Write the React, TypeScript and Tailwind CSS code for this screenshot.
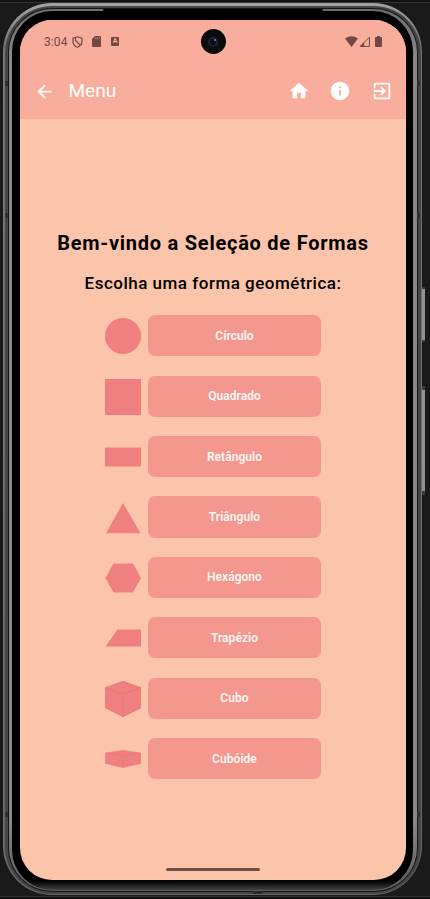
import React from "react";

const shapes: { label: string; art: React.ReactNode }[] = [
  { label: "Círculo", art: <circle cx="18" cy="18" r="18" /> },
  { label: "Quadrado", art: <path d="M0 0H36V36H0Z" /> },
  { label: "Retângulo", art: <path d="M0 8.5H36V27.5H0Z" /> },
  { label: "Triângulo", art: <path d="M18 3L35.5 33.3H1Z" /> },
  { label: "Hexágono", art: <path d="M8.5 3.5H28L36 18L28 32.5H8.5L.5 18Z" /> },
  { label: "Trapézio", art: <path d="M12.5 9.5H36V26.5H.5Z" /> },
  {
    label: "Cubo",
    art: (
      <g stroke="#dc7272" strokeWidth=".6">
        <path d="M18 .3L35.7 6.5V27L18 35.7L.5 27V6.5Z" />
        <path d="M.5 6.5L18 13L35.7 6.5M18 13V35.7" fill="none" />
      </g>
    ),
  },
  {
    label: "Cubóide",
    art: (
      <g stroke="#e07676" strokeWidth=".5">
        <path d="M18 9.5L35.7 12V22.5L18 26.5L.5 22.5V12Z" />
        <path d="M.5 12L18 15L35.7 12M18 15V26.5" fill="none" />
      </g>
    ),
  },
];

function StatusBar() {
  return (
    <div className="flex h-[43px] items-center justify-between pl-[24px] pr-[24px] text-[#73483f]">
      <div className="flex items-center">
        <span className="w-[27px] whitespace-nowrap text-[12px] leading-[14px] tracking-[0.1px]">3:04</span>
        <svg className="ml-px h-[12px] w-[11px]" viewBox="0 0 11 12" fill="none" stroke="currentColor" strokeWidth="1.2">
          <path d="M5.5.8L10 2.3V5.5C10 8.2 8 10.3 5.5 11.2C3 10.3 1 8.2 1 5.5V2.3Z" />
          <path d="M3.5 2V4.5L8.5 9.5" />
        </svg>
        <svg className="ml-[9px] h-[11px] w-[9px]" viewBox="0 0 9 11" fill="currentColor">
          <path fillRule="evenodd" d="M3 0H8Q9 0 9 1V10Q9 11 8 11H1Q0 11 0 10V3ZM3.6 1.5V3H4.2V1.5ZM5.3 1.5V3H5.9V1.5ZM7 1.5V3H7.6V1.5Z" />
        </svg>
        <span className="ml-[10px] flex h-[9px] w-[8px] items-center justify-center rounded-[1px] bg-[#73483f] text-[7px] font-bold leading-none text-[#f9ae9e]">A</span>
      </div>
      <div className="flex items-center">
        <svg className="h-[11px] w-[13px]" viewBox="0 0 13 11" fill="currentColor">
          <path d="M0 2.5Q6.5-2 13 2.5L6.5 11Z" />
        </svg>
        <svg className="ml-[1px] h-[11px] w-[11px]" viewBox="0 0 11 11">
          <path d="M1.3 10.4L10.4 1.2V10.4Z" fill="none" stroke="currentColor" />
          <path d="M1 10.5L5.2 6.5V10.5Z" fill="currentColor" />
        </svg>
        <svg className="ml-[5px] h-[11px] w-[7px]" viewBox="0 0 7 11" fill="currentColor">
          <path d="M2 0H5V1H6Q7 1 7 2V10Q7 11 6 11H1Q0 11 0 10V2Q0 1 1 1H2Z" />
        </svg>
      </div>
    </div>
  );
}

function TopBar() {
  return (
    <header className="flex h-[56px] items-center pl-[13.5px] pr-[13.5px] text-white">
      <svg className="h-[21px] w-[21px]" viewBox="0 0 24 24" fill="currentColor">
        <path d="M20 11H7.83l5.59-5.59L12 4l-8 8 8 8 1.41-1.41L7.83 13H20v-2z" />
      </svg>
      <span className="ml-[14px] flex-1 text-[19px] leading-6">Menu</span>
      <div className="flex items-center gap-[19.5px]">
        <svg className="h-[22px] w-[22px]" viewBox="0 0 24 24" fill="currentColor">
          <path d="M10 20v-6h4v6h5v-8h3L12 3 2 12h3v8z" />
        </svg>
        <svg className="h-[22px] w-[22px]" viewBox="0 0 24 24" fill="currentColor">
          <path d="M12 2C6.48 2 2 6.48 2 12s4.48 10 10 10 10-4.48 10-10S17.52 2 12 2zm1 15h-2v-6h2v6zm0-8h-2V7h2v2z" />
        </svg>
        <svg className="h-[22px] w-[22px]" viewBox="0 0 24 24" fill="currentColor">
          <path d="M10.09 15.59L11.5 17l5-5-5-5-1.41 1.41L12.67 11H3v2h9.67l-2.58 2.59zM19 3H5c-1.11 0-2 .9-2 2v4h2V5h14v14H5v-4H3v4c0 1.1.89 2 2 2h14c1.1 0 2-.9 2-2V5c0-1.1-.9-2-2-2z" />
        </svg>
      </div>
    </header>
  );
}

function Camera() {
  return (
    <div className="absolute left-[180.5px] top-[9px] flex h-[25px] w-[25px] items-center justify-center rounded-full bg-[#0b0c0e]">
      <div className="flex h-[10px] w-[10px] items-center justify-center rounded-full bg-[#20222b]">
        <div className="flex h-[6px] w-[6px] justify-end rounded-full bg-[#090a20]">
          <div className="h-[2px] w-[2px] rounded-full bg-[#8992b5]" />
        </div>
      </div>
    </div>
  );
}

export default function App() {
  return (
    <div
      className="relative h-[899px] w-[430px] overflow-hidden border-t-2 border-[#121212] bg-[#1a1a1a] pl-[3px] pt-px"
      style={{ fontFamily: 'Roboto, "Liberation Sans", sans-serif' }}
    >
      <div className="absolute left-0 top-0 h-px w-full bg-[#333333]" />
      <div className="absolute bottom-[2px] left-0 h-px w-full bg-[#303030]" />
      <div className="absolute bottom-0 left-0 h-[2px] w-full bg-[#101010]" />
      <div className="absolute left-[421px] top-[285px] h-[55px] w-[4px] border-y-2 border-[#3c3c3c] bg-[#929292]" />
      <div className="absolute left-[421px] top-[384px] h-[109px] w-[4px] border-y-4 border-[#3c3c3c] bg-[#929292]" />
      <div className="relative h-[892px] w-[419px] rounded-[49px] bg-[linear-gradient(180deg,#a5a5a0_0px,#777_40px,#686868_100%)] p-[3px_1px_1px_2px]">
        <div className="h-full rounded-[47px] bg-[#464646] p-[2px_3px_2px_3px]">
          <div className="h-full rounded-[44px] bg-[#161616] p-px">
            <div className="h-full rounded-[43px] bg-[linear-gradient(180deg,#6e6e6e_0px,#888_50px,#888_810px,#5c5c5c_100%)] p-[2px_4px_1px_3px]">
              <div className="h-full rounded-[40px] bg-[linear-gradient(0deg,#424242_0px,#000_9px)] p-[9px_6px_8px_8px]">
                <main className="relative flex h-[860px] w-[386px] flex-col overflow-hidden rounded-[32px] bg-[#fcc4ab]">
                  <div className="h-[99px] bg-[#f8ad9d]">
                    <StatusBar />
                    <TopBar />
                  </div>
                  <Camera />
                  <section className="flex flex-1 flex-col items-center pt-[110px] text-black">
                    <h1 className="whitespace-nowrap text-[20px] font-bold leading-[28px] tracking-[0.75px]">Bem-vindo a Seleção de Formas</h1>
                    <p className="mt-[14px] whitespace-nowrap text-[17px] font-medium leading-[24px] tracking-[0.5px]">Escolha uma forma geométrica:</p>
                    <div className="mt-[20.3px] flex flex-col gap-[19.2px] self-start pl-[85.3px]">
                      {shapes.map(({ label, art }) => (
                        <div key={label} className="flex h-[41.2px] items-center gap-[6.7px]">
                          <svg className="mt-px h-[36px] w-[36px]" viewBox="0 0 36 36" fill="#f08080">{art}</svg>
                          <button className="h-[41.2px] w-[173px] rounded-[7px] bg-[#f4978e] text-[12px] font-semibold leading-4 tracking-[0.05px] text-[#fff7f3]">{label}</button>
                        </div>
                      ))}
                    </div>
                  </section>
                  <div className="absolute bottom-[9px] left-[146px] h-[3px] w-[94px] rounded-full bg-[#725044]" />
                </main>
              </div>
            </div>
          </div>
        </div>
        <div className="absolute left-[2px] top-[78px] h-[5px] w-[3px] bg-[#303030]" />
        <div className="absolute right-[2px] top-[78px] h-[5px] w-[3px] bg-[#303030]" />
        <div className="absolute left-[2px] top-[210px] h-[5px] w-[3px] bg-[#303030]" />
        <div className="absolute right-[2px] top-[210px] h-[5px] w-[3px] bg-[#303030]" />
        <div className="absolute left-[2px] bottom-[78px] h-[5px] w-[3px] bg-[#303030]" />
        <div className="absolute right-[2px] bottom-[78px] h-[5px] w-[3px] bg-[#303030]" />
        <div className="absolute bottom-[1px] left-[250px] h-[3px] w-[9px] bg-[#292929]" />
        <div className="absolute left-[100px] top-[6px] h-[2px] w-[220px] rounded-full bg-[#050505]" />
      </div>
    </div>
  );
}
